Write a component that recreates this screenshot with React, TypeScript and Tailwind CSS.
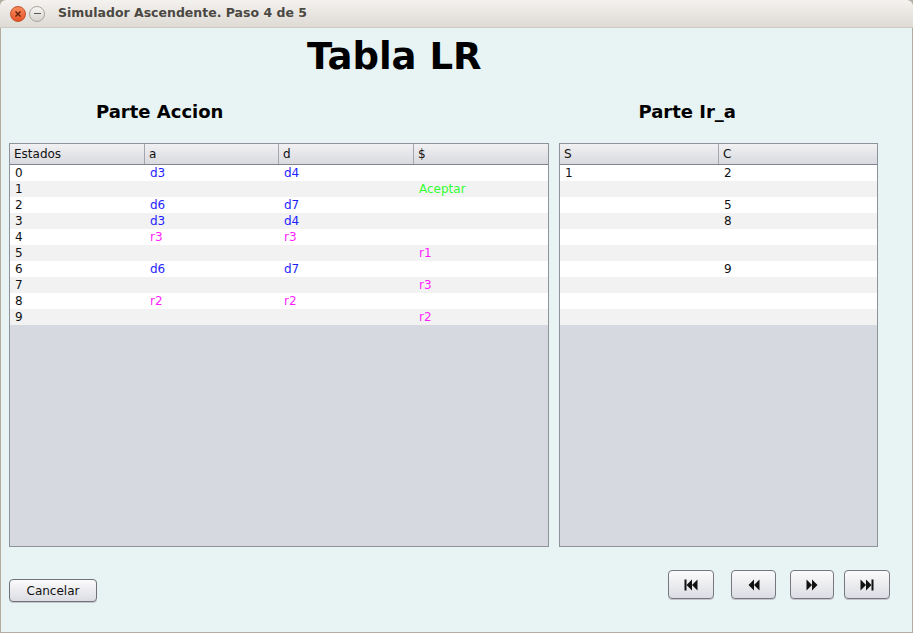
import React from 'react';

type Cell = { text: string; color?: string };

const BLUE = 'text-[#1f1fff]';
const MAGENTA = 'text-[#ff1fff]';
const GREEN = 'text-[#33ff33]';

const ACCION: Cell[][] = [
  [{ text: '0' }, { text: 'd3', color: BLUE }, { text: 'd4', color: BLUE }, { text: '' }],
  [{ text: '1' }, { text: '' }, { text: '' }, { text: 'Aceptar', color: GREEN }],
  [{ text: '2' }, { text: 'd6', color: BLUE }, { text: 'd7', color: BLUE }, { text: '' }],
  [{ text: '3' }, { text: 'd3', color: BLUE }, { text: 'd4', color: BLUE }, { text: '' }],
  [{ text: '4' }, { text: 'r3', color: MAGENTA }, { text: 'r3', color: MAGENTA }, { text: '' }],
  [{ text: '5' }, { text: '' }, { text: '' }, { text: 'r1', color: MAGENTA }],
  [{ text: '6' }, { text: 'd6', color: BLUE }, { text: 'd7', color: BLUE }, { text: '' }],
  [{ text: '7' }, { text: '' }, { text: '' }, { text: 'r3', color: MAGENTA }],
  [{ text: '8' }, { text: 'r2', color: MAGENTA }, { text: 'r2', color: MAGENTA }, { text: '' }],
  [{ text: '9' }, { text: '' }, { text: '' }, { text: 'r2', color: MAGENTA }],
];

const IR_A: Cell[][] = [
  [{ text: '1' }, { text: '2' }],
  [{ text: '' }, { text: '' }],
  [{ text: '' }, { text: '5' }],
  [{ text: '' }, { text: '8' }],
  [{ text: '' }, { text: '' }],
  [{ text: '' }, { text: '' }],
  [{ text: '' }, { text: '9' }],
  [{ text: '' }, { text: '' }],
  [{ text: '' }, { text: '' }],
  [{ text: '' }, { text: '' }],
];

function Table({ headers, rows, widths, className }: { headers: string[]; rows: Cell[][]; widths: string[]; className: string }) {
  return (
    <div className={`flex flex-col border border-[#8e939b] bg-[#d6d9e0] ${className}`}>
      <div className="flex h-[21px] border-b border-[#7f848c] bg-gradient-to-b from-[#f1f1f3] to-[#d9dadf]">
        {headers.map((h, i) => (
          <div
            key={h}
            className={`${widths[i]} flex items-center pl-[4px] text-[12px] text-[#111] ${i < headers.length - 1 ? 'border-r border-[#a3a6ad]' : 'flex-1'}`}
          >
            {h}
          </div>
        ))}
      </div>
      {rows.map((r, ri) => (
        <div key={ri} className={`flex h-[16px] ${ri % 2 === 0 ? 'bg-white' : 'bg-[#f2f2f2]'}`}>
          {r.map((c, ci) => (
            <div
              key={ci}
              className={`${widths[ci]} ${ci === r.length - 1 ? 'flex-1' : ''} pl-[5px] text-[12px] leading-[16px] ${c.color ?? 'text-[#111]'}`}
            >
              {c.text}
            </div>
          ))}
        </div>
      ))}
    </div>
  );
}

function NavIcon({ kind }: { kind: 'first' | 'prev' | 'next' | 'last' }) {
  return (
    <svg width="16" height="14" viewBox="0 0 16 14">
      {kind === 'first' && (
        <g fill="#111">
          <rect x="1.5" y="1.5" width="2" height="11" />
          <polygon points="9,1.5 3.5,7 9,12.5" />
          <polygon points="14.5,1.5 9,7 14.5,12.5" />
        </g>
      )}
      {kind === 'prev' && (
        <g fill="#111">
          <polygon points="8,1.5 2.5,7 8,12.5" />
          <polygon points="13.5,1.5 8,7 13.5,12.5" />
        </g>
      )}
      {kind === 'next' && (
        <g fill="#111">
          <polygon points="2.5,1.5 8,7 2.5,12.5" />
          <polygon points="8,1.5 13.5,7 8,12.5" />
        </g>
      )}
      {kind === 'last' && (
        <g fill="#111">
          <polygon points="1.5,1.5 7,7 1.5,12.5" />
          <polygon points="7,1.5 12.5,7 7,12.5" />
          <rect x="12.5" y="1.5" width="2" height="11" />
        </g>
      )}
    </svg>
  );
}

function NavButton({ kind, w }: { kind: 'first' | 'prev' | 'next' | 'last'; w: string }) {
  return (
    <button
      type="button"
      className={`${w} flex h-[29px] items-center justify-center rounded-[4px] border border-[#75787e] bg-gradient-to-b from-[#fbfbfc] to-[#dcdde3] shadow-[0_1px_0_#c4c6cc]`}
    >
      <NavIcon kind={kind} />
    </button>
  );
}

export default function App() {
  return (
    <div
      className="flex h-[633px] w-[913px] flex-col overflow-hidden bg-[#b3aca1]"
      style={{ fontFamily: '"DejaVu Sans", sans-serif' }}
    >
      {/* title bar */}
      <div className="flex h-[28px] items-center rounded-t-[6px] border-b border-[#cfcac2] bg-gradient-to-b from-[#f4f2ef] to-[#dedad4] pl-[10px]">
        <div className="flex h-[16px] w-[16px] items-center justify-center rounded-full border border-[#c4502a] bg-gradient-to-b from-[#f88a5d] to-[#e65325]">
          <svg width="8" height="8" viewBox="0 0 8 8">
            <path d="M1.5 1.5 L6.5 6.5 M6.5 1.5 L1.5 6.5" stroke="#5a1f0c" strokeWidth="1.3" />
          </svg>
        </div>
        <div className="ml-[3px] flex h-[16px] w-[16px] items-center justify-center rounded-full border border-[#a9a59e] bg-gradient-to-b from-[#f7f6f4] to-[#d6d3ce]">
          <div className="h-[1.5px] w-[7px] bg-[#5c5a56]" />
        </div>
        <div className="ml-[13px] text-[12.5px] font-bold text-[#4b4843]">Simulador Ascendente. Paso 4 de 5</div>
      </div>

      {/* body */}
      <div className="mx-px mb-px flex flex-1 flex-col bg-[#e8f4f4]">
        <div className="pl-[306px] pt-[7px] text-[37px] font-bold leading-[44px] text-black">Tabla LR</div>

        <div className="mt-[22px] flex text-[18px] font-bold leading-[22px] text-black">
          <div className="pl-[95px]">Parte Accion</div>
          <div className="pl-[415px]">Parte Ir_a</div>
        </div>

        <div className="mt-[20px] flex gap-[10px] pl-[8px]">
          <Table
            className="h-[404px] w-[540px]"
            headers={['Estados', 'a', 'd', '$']}
            widths={['w-[135px]', 'w-[134px]', 'w-[135px]', 'w-[134px]']}
            rows={ACCION}
          />
          <Table className="h-[404px] w-[319px]" headers={['S', 'C']} widths={['w-[159px]', 'w-[158px]']} rows={IR_A} />
        </div>

        <div className="flex items-start pl-[8px] pr-[22px] pt-[23px]">
          <button
            type="button"
            className="mt-[9px] flex h-[23px] w-[88px] items-center justify-center rounded-[4px] border border-[#6f7278] bg-gradient-to-b from-[#fbfbfc] to-[#dcdde3] text-[12px] text-[#111] shadow-[0_1px_0_#c4c6cc]"
          >
            Cancelar
          </button>
          <div className="ml-auto flex">
            <NavButton kind="first" w="w-[46px]" />
            <div className="ml-[17px]">
              <NavButton kind="prev" w="w-[45px]" />
            </div>
            <div className="ml-[14px]">
              <NavButton kind="next" w="w-[44px]" />
            </div>
            <div className="ml-[10px]">
              <NavButton kind="last" w="w-[46px]" />
            </div>
          </div>
        </div>
      </div>
    </div>
  );
}
